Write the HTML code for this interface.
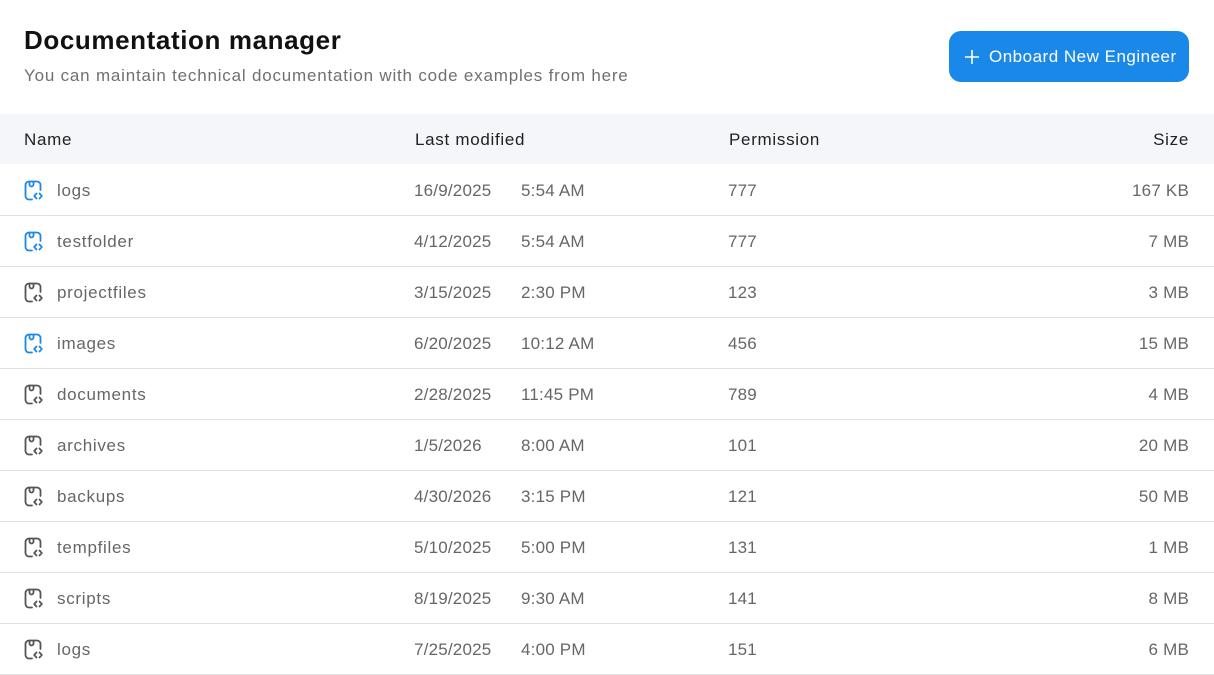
<!DOCTYPE html>
<html><head><style>
body{margin:0;width:1214px;height:654px;overflow:hidden;background:#fff;font-family:"Liberation Sans",sans-serif;position:relative}
h1{position:absolute;left:24px;top:25px;margin:0;font-size:26px;font-weight:bold;color:#111;letter-spacing:0.6px}
.sub{position:absolute;left:24px;top:66px;font-size:17px;color:#707070;letter-spacing:0.8px}
.btn{position:absolute;left:949px;top:31px;width:240px;height:51px;border-radius:12px;background:#1a88e8;color:#fff;font-size:17px;line-height:51px;box-sizing:border-box;padding-left:40px;letter-spacing:0.5px}
.btn svg{position:absolute;left:15px;top:18px}
.hdr{position:absolute;left:0;top:114px;width:1214px;height:50px;background:#f5f6fa;font-size:17px;color:#222;letter-spacing:0.7px}
.hdr span,.row span{position:absolute;line-height:51px}
.row{position:absolute;left:0;width:1214px;height:50px;border-bottom:1px solid #e0e0e0;font-size:17px;color:#666;letter-spacing:0.7px}
.row span.n{letter-spacing:0.2px}
.r{right:25px;text-align:right}
.row svg{position:absolute;left:24px;top:15px}
</style></head><body>
<h1>Documentation manager</h1>
<div class="sub">You can maintain technical documentation with code examples from here</div>
<div class="btn"><svg width="16" height="16" viewBox="0 0 16 16"><path d="M8 1v14M1 8h14" stroke="#fff" stroke-width="1.6"/></svg>Onboard New Engineer</div>
<div class="hdr"><span style="left:24px">Name</span><span style="left:415px">Last modified</span><span style="left:729px">Permission</span><span class="r">Size</span></div>
<div id="rows"></div>
<script>
const d=[["logs","16/9/2025","5:54 AM","777","167 KB",1],["testfolder","4/12/2025","5:54 AM","777","7 MB",1],["projectfiles","3/15/2025","2:30 PM","123","3 MB",0],["images","6/20/2025","10:12 AM","456","15 MB",1],["documents","2/28/2025","11:45 PM","789","4 MB",0],["archives","1/5/2026","8:00 AM","101","20 MB",0],["backups","4/30/2026","3:15 PM","121","50 MB",0],["tempfiles","5/10/2025","5:00 PM","131","1 MB",0],["scripts","8/19/2025","9:30 AM","141","8 MB",0],["logs","7/25/2025","4:00 PM","151","6 MB",0]];
let h="";d.forEach((r,i)=>{const c=r[5]?"#1a88e8":"#555";
h+=`<div class="row" style="top:${165+i*51}px"><svg width="20" height="21" viewBox="0 0 20 21" fill="none" stroke="${c}" stroke-width="1.8" stroke-linecap="round" stroke-linejoin="round"><path d="M8 19.5H5a3.5 3.5 0 0 1-3.5-3.5V5A3.5 3.5 0 0 1 5 1.5h8A3.5 3.5 0 0 1 16.5 5v5"/><path d="M5.5 1.5v3a2 2 0 0 0 4 0V2"/><path d="M12.5 13.5l-2.3 2.5 2.3 2.5M15.5 13.5l2.3 2.5-2.3 2.5"/></svg><span style="left:57px">${r[0]}</span><span class="n" style="left:414px">${r[1]}</span><span class="n" style="left:521px">${r[2]}</span><span class="n" style="left:728px">${r[3]}</span><span class="n r">${r[4]}</span></div>`});
document.getElementById("rows").innerHTML=h;
</script>
</body></html>
